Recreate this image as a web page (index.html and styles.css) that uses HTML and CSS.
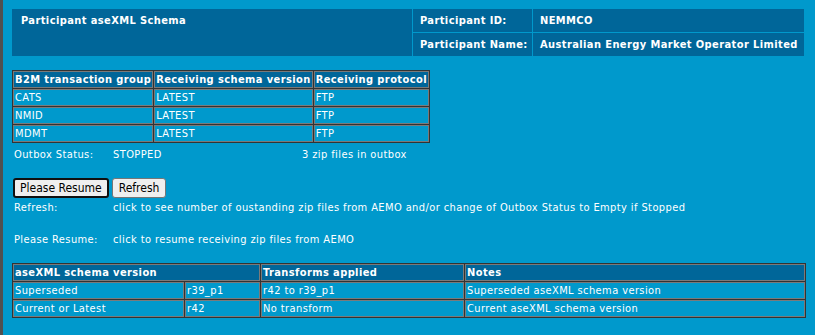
FILE: index.html
```html
<!DOCTYPE html>
<html lang="en">
<head>
    <meta charset="UTF-8">
    <meta name="viewport" content="width=device-width, initial-scale=1.0">
    <link rel="stylesheet" href="styles.css">
    <title>Participant aseXML Schema</title>
</head>
<body>
<div class="page">
    <table class="head">
        <tr>
            <td class="title" rowspan="2">Participant aseXML Schema</td>
            <td class="label">Participant ID:</td>
            <td class="value">NEMMCO</td>
        </tr>
        <tr>
            <td class="label">Participant Name:</td>
            <td class="value">Australian Energy Market Operator Limited</td>
        </tr>
    </table>

    <table class="grid groups">
        <thead>
            <tr>
                <th>B2M transaction group</th>
                <th>Receiving schema version</th>
                <th>Receiving protocol</th>
            </tr>
        </thead>
        <tbody>
            <tr><td>CATS</td><td>LATEST</td><td>FTP</td></tr>
            <tr><td>NMID</td><td>LATEST</td><td>FTP</td></tr>
            <tr><td>MDMT</td><td>LATEST</td><td>FTP</td></tr>
        </tbody>
    </table>

    <div class="status">
        <span class="key">Outbox Status:</span>
        <span class="state">STOPPED</span>
        <span>3 zip files in outbox</span>
    </div>

    <div class="actions">
        <button class="btn btn-focus">Please Resume</button>
        <button class="btn">Refresh</button>
    </div>

    <div class="help">
        <div class="help-row">
            <span class="key">Refresh:</span>
            <span>click to see number of oustanding zip files from AEMO and/or change of Outbox Status to Empty if Stopped</span>
        </div>
        <div class="help-row spaced">
            <span class="key">Please Resume:</span>
            <span>click to resume receiving zip files from AEMO</span>
        </div>
    </div>

    <table class="grid versions">
        <thead>
            <tr>
                <th colspan="2">aseXML schema version</th>
                <th>Transforms applied</th>
                <th>Notes</th>
            </tr>
        </thead>
        <tbody>
            <tr><td class="c1">Superseded</td><td class="c2">r39_p1</td><td class="c3">r42 to r39_p1</td><td>Superseded aseXML schema version</td></tr>
            <tr><td class="c1">Current or Latest</td><td class="c2">r42</td><td class="c3">No transform</td><td>Current aseXML schema version</td></tr>
        </tbody>
    </table>
</div>
</body>
</html>
```

FILE: styles.css
```css
body {
    margin: 0;
    background-color: #0099cc;
    font-family: "DejaVu Sans Condensed", "DejaVu Sans", sans-serif;
    font-size: 11px;
    letter-spacing: 0.4px;
    color: #ffffff;
}

.page {
    min-height: 100vh;
    box-sizing: border-box;
    border-left: 3px solid #505050;
    padding: 8px 0 0 8px;
}

/* top header block */
.head {
    width: 794px;
    table-layout: fixed;
    border-spacing: 1px;
    font-weight: bold;
}

.head td {
    background-color: #006699;
    padding: 5px 7px;
    line-height: 13px;
    vertical-align: top;
    white-space: nowrap;
}

.head .title {
    width: 384px;
    padding-left: 9px;
}

.head .label {
    width: 105px;
}

/* bordered tables */
.grid {
    background-color: #333333;
    border-spacing: 1px;
    margin-left: 1px;
}

.grid th,
.grid td {
    border: 1px solid #7a7a7a;
    background-color: #0099cc;
    padding: 1px 1px;
    line-height: 13px;
    text-align: left;
    white-space: nowrap;
}

.grid th {
    background-color: #006699;
}

.groups {
    margin-top: 13px;
}

.status {
    display: flex;
    margin: 4px 0 0 3px;
    line-height: 16px;
}

.key {
    width: 99px;
    flex-shrink: 0;
}

.state {
    width: 189px;
}

.actions {
    display: flex;
    gap: 3px;
    margin: 15px 0 0 2px;
}

.btn {
    font-family: "DejaVu Sans Condensed", "DejaVu Sans", sans-serif;
    font-size: 12px;
    height: 20px;
    padding: 0 6px;
    background-color: #efefef;
    color: #000000;
    border: 1px solid #767676;
    border-radius: 3px;
}

.btn-focus {
    border: 2px solid #101010;
    padding: 0 5px;
}

.help {
    margin: 2px 0 0 3px;
    line-height: 16px;
}

.help-row {
    display: flex;
}

.help-row.spaced {
    margin-top: 16px;
}

.versions {
    margin-top: 15px;
    width: 794px;
}

.versions .c1 {
    width: 167px;
}

.versions .c2 {
    width: 71px;
}

.versions .c3 {
    width: 199px;
}
```
